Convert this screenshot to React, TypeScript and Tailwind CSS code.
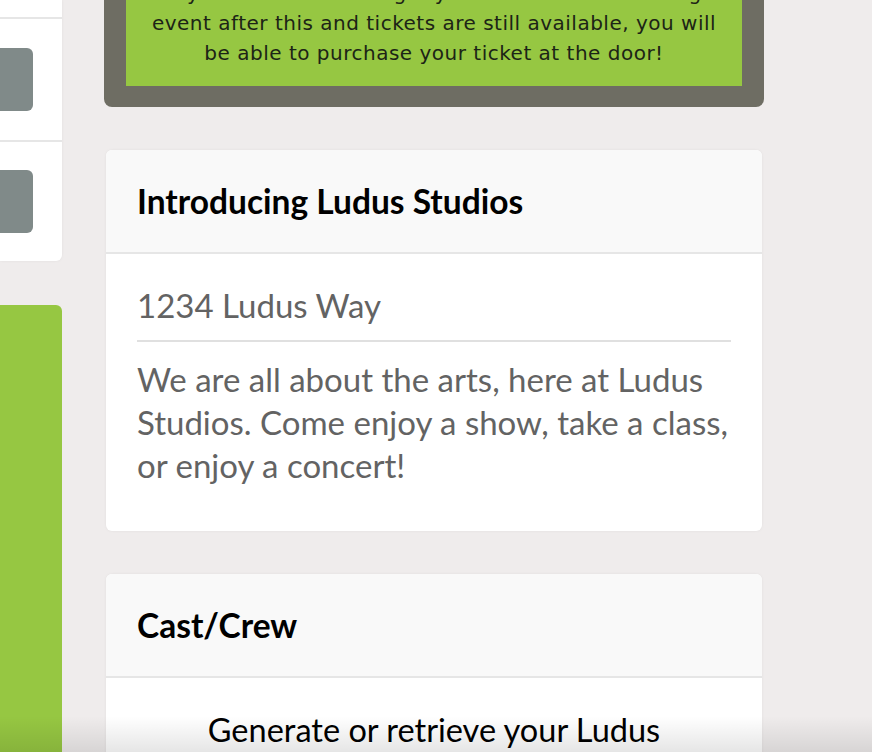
import React from "react";

const body = { fontFamily: "Lato, 'Noto Sans', sans-serif" };

function Card({ title, children }: { title: string; children: React.ReactNode }) {
  return (
    <div className="mx-[2px] rounded-md bg-white shadow-[0_0_3px_rgba(0,0,0,0.06)] overflow-hidden">
      <div className="h-[104px] bg-[#f9f9f9] border-b-2 border-[#e6e6e6] flex items-center px-[31px]">
        <h2 className="text-[33.5px] font-bold text-black">{title}</h2>
      </div>
      {children}
    </div>
  );
}

export default function App() {
  return (
    <div className="relative h-[752px] w-[872px] overflow-hidden bg-[#efecec] flex" style={body}>
      {/* LEFT COLUMN (cut off) */}
      <div className="w-[62px] shrink-0 flex flex-col">
        <div className="bg-white rounded-br-md shadow-[0_0_3px_rgba(0,0,0,0.06)]">
          <div className="h-[17px]" />
          <div className="border-t-2 border-[#e6e6e6] h-[123px] flex items-center">
            <div className="w-[33px] h-[63px] bg-[#808a89] rounded-r-md" />
          </div>
          <div className="border-t-2 border-[#e6e6e6] h-[121px] flex items-center">
            <div className="w-[33px] h-[63px] bg-[#808a89] rounded-r-md" />
          </div>
        </div>
        <div className="mt-[44px] flex-1 bg-[#96c742] rounded-tr-md" />
      </div>

      {/* CENTER COLUMN */}
      <div className="ml-[42px] w-[660px] shrink-0 flex flex-col">
        <div className="bg-[#6e6d63] rounded-b-lg px-[22px] pb-[21px]">
          <div
            className="bg-[#96c742] -mt-[22px] pb-[18px] text-center text-[20px] leading-[30px] tracking-[0.5px] text-[#1c2416]"
            style={{ fontFamily: "'DejaVu Sans', 'Open Sans', sans-serif" }}
          >
            <p>If you are not able to get your ticket before the big</p>
            <p>event after this and tickets are still available, you will</p>
            <p>be able to purchase your ticket at the door!</p>
          </div>
        </div>

        <div className="mt-[43px]">
          <Card title="Introducing Ludus Studios">
            <div className="px-[31px] pt-[30px] pb-[44px] text-[#636363] text-[33px]">
              <p className="leading-[42px]">1234 Ludus Way</p>
              <div className="mt-[14px] h-[2px] bg-[#e0e0e0]" />
              <p className="mt-[16px] leading-[43px]">
                We are all about the arts, here at Ludus Studios. Come enjoy a show, take a class, or enjoy a concert!
              </p>
            </div>
          </Card>
        </div>

        <div className="mt-[43px]">
          <Card title="Cast/Crew">
            <div className="pt-[30px] text-center text-[32.5px] text-black leading-[43px]">
              <p>Generate or retrieve your Ludus</p>
              <p>Cast/Crew code below.</p>
            </div>
          </Card>
        </div>
      </div>

      {/* bottom shade */}
      <div className="pointer-events-none absolute inset-x-0 bottom-0 h-[36px] bg-gradient-to-b from-transparent to-black/10" />
    </div>
  );
}
